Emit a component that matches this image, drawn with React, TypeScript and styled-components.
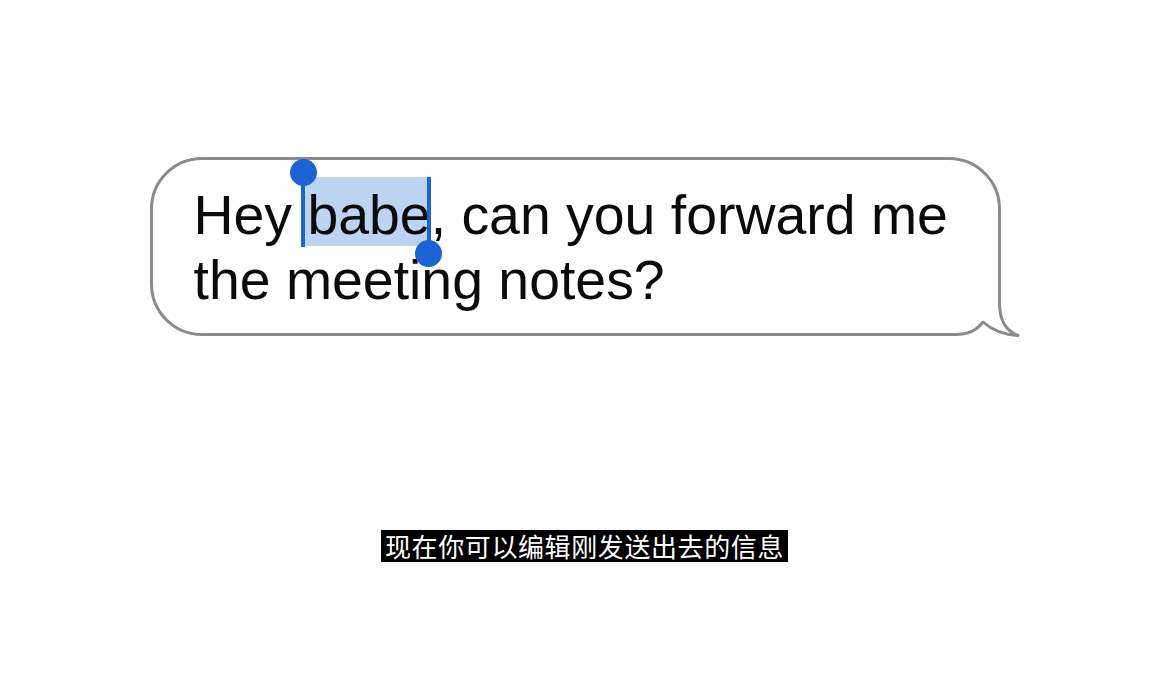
import styled, { createGlobalStyle } from 'styled-components';

const GlobalStyle = createGlobalStyle`
  html, body {
    margin: 0;
    padding: 0;
    background: #ffffff;
  }
`;

const App = () => {
  return (
    <>
      <GlobalStyle />
      <Page>
        <BubbleWrap>
          <Bubble>
            <MessageText>
              Hey <Selection>babe<Handle $side="start" /><Handle $side="end" /></Selection>, can you forward me the meeting notes?
            </MessageText>
            <Tail viewBox="780 110 92 72" width="92" height="72">
              <path
                d="M 849.5 110 L 849.5 146 C 849.5 164 856 174 868 178.5 C 855 178 842 173 833 165 C 826 174 818 177.5 805 177.5 L 780 177.5 L 780 110 Z"
                fill="#ffffff"
              />
              <path
                d="M 849.5 110 L 849.5 146 C 849.5 164 856 174 868 178.5 C 855 178 842 173 833 165 C 826 174 818 177.5 805 177.5 L 780 177.5"
                fill="none"
                stroke="#8a8a8a"
                strokeWidth="3"
                strokeLinejoin="round"
              />
            </Tail>
          </Bubble>
        </BubbleWrap>
        <Subtitle>现在你可以编辑刚发送出去的信息</Subtitle>
      </Page>
    </>
  );
};

const Page = styled.main`
  display: flex;
  flex-direction: column;
  align-items: center;
  width: 1169px;
  height: 690px;
  padding-top: 157px;
  box-sizing: border-box;
`;

const BubbleWrap = styled.div`
  padding-right: 17px;
  margin-right: 2px;
`;

const Bubble = styled.div`
  position: relative;
  z-index: 0;
  width: 851px;
  height: 179px;
  box-sizing: border-box;
  padding: 23px 28px 0 41px;
  border: 3px solid #8a8a8a;
  border-radius: 52px;
  background: #ffffff;
`;

const MessageText = styled.p`
  margin: 0;
  font-family: 'Liberation Sans', Arial, sans-serif;
  font-size: 55.4px;
  line-height: 65px;
  color: #0b0b0b;
`;

const Selection = styled.span`
  position: relative;
  padding-top: 7px;

  &::before {
    content: '';
    position: absolute;
    z-index: -1;
    top: 0;
    bottom: 0;
    left: -4px;
    right: 2px;
    background: #bcd4f2;
  }
`;

const Handle = styled.span<{ $side: 'start' | 'end' }>`
  position: absolute;
  top: 0;
  bottom: -1px;
  width: 4px;
  background: #1a64d6;
  ${({ $side }) => ($side === 'start' ? 'left: -6px;' : 'right: 0;')}

  &::after {
    content: '';
    position: absolute;
    left: 50%;
    width: 27px;
    height: 27px;
    margin-left: -13.5px;
    border-radius: 50%;
    background: #1a64d6;
    ${({ $side }) => ($side === 'start' ? 'top: -18px;' : 'bottom: -20px;')}
  }
`;

const Tail = styled.svg`
  position: absolute;
  left: 777px;
  top: 107px;
  overflow: visible;
`;

const Subtitle = styled.div`
  margin-top: 194px;
  padding: 0 4px;
  background: #000000;
  color: #ffffff;
  font-family: 'Noto Sans CJK SC', 'Noto Sans', sans-serif;
  font-size: 26px;
  line-height: 32px;
  letter-spacing: 0.6px;
`;

export default App;
